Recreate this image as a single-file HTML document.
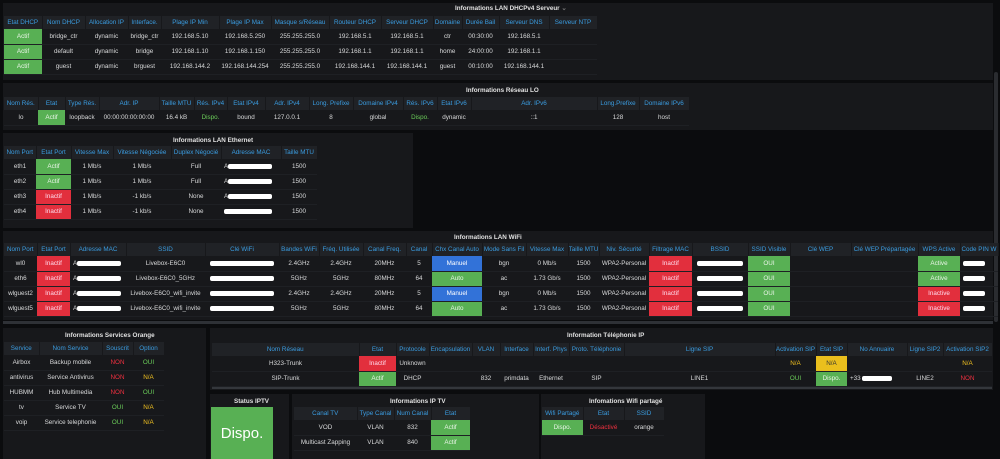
<!DOCTYPE html>
<html><head><meta charset="utf-8"><style>
*{margin:0;padding:0;box-sizing:border-box}
body{width:1000px;height:459px;background:#0b0c0e;font-family:"Liberation Sans",sans-serif;font-size:6.3px;color:#d8d9da;position:relative;overflow:hidden}
.p{position:absolute;background:#17181b}
.t{position:absolute;font-weight:bold;color:#e0e0e0;font-size:6.3px;white-space:nowrap}
table{position:absolute;border-collapse:collapse;table-layout:fixed}
th{height:13px;background:#202226;color:#3a9ce0;font-weight:normal;text-align:center;white-space:nowrap;overflow:hidden;border-right:1px solid #17181b}
td{height:15px;text-align:center;white-space:nowrap;overflow:hidden;border-bottom:1px solid #1e2024;padding:0 1px}
td.g{background:#58b054;color:#eaf5e8}
td.r{background:#e22f3d;color:#fde}
td.b{background:#3272d8;color:#fff}
td.y{background:#eabf1d;color:#333}
.gt{color:#6ccf5a}.rt{color:#f0303f}.yt{color:#f0c020}
.w{display:inline-block;background:#fff;height:5px;border-radius:2px;vertical-align:middle}
td.l{text-align:left;padding-left:3px}
</style></head><body>

<!-- Panel 1 DHCP -->
<div class="p" style="left:3px;top:3px;width:990px;height:77px"></div>
<div class="t" style="left:455px;top:5px">Informations LAN DHCPv4 Serveur <span style="color:#777">⌄</span></div>
<table style="left:4px;top:16px;width:593px">
<colgroup><col style="width:38px"><col style="width:43px"><col style="width:43px"><col style="width:33px"><col style="width:58px"><col style="width:52px"><col style="width:58px"><col style="width:52px"><col style="width:52px"><col style="width:29px"><col style="width:37px"><col style="width:50px"><col style="width:48px"></colgroup>
<tr><th>Etat DHCP</th><th>Nom DHCP</th><th>Allocation IP</th><th>Interface.</th><th>Plage IP Min</th><th>Plage IP Max</th><th>Masque s/Réseau</th><th>Routeur DHCP</th><th>Serveur DHCP</th><th>Domaine</th><th>Durée Bail</th><th>Serveur DNS</th><th>Serveur NTP</th></tr>
<tr><td class="g">Actif</td><td>bridge_ctr</td><td>dynamic</td><td>bridge_ctr</td><td>192.168.5.10</td><td>192.168.5.250</td><td>255.255.255.0</td><td>192.168.5.1</td><td>192.168.5.1</td><td>ctr</td><td>00:30:00</td><td>192.168.5.1</td><td></td></tr>
<tr><td class="g">Actif</td><td>default</td><td>dynamic</td><td>bridge</td><td>192.168.1.10</td><td>192.168.1.150</td><td>255.255.255.0</td><td>192.168.1.1</td><td>192.168.1.1</td><td>home</td><td>24:00:00</td><td>192.168.1.1</td><td></td></tr>
<tr><td class="g">Actif</td><td>guest</td><td>dynamic</td><td>brguest</td><td>192.168.144.2</td><td>192.168.144.254</td><td>255.255.255.0</td><td>192.168.144.1</td><td>192.168.144.1</td><td>guest</td><td>00:10:00</td><td>192.168.144.1</td><td></td></tr>
</table>

<!-- Panel 2 LO -->
<div class="p" style="left:3px;top:83px;width:990px;height:47px"></div>
<div class="t" style="left:466px;top:87px">Informations Réseau LO</div>
<table style="left:4px;top:97px;width:685px">
<colgroup><col style="width:34px"><col style="width:27px"><col style="width:34px"><col style="width:60px"><col style="width:35px"><col style="width:33px"><col style="width:38px"><col style="width:44px"><col style="width:44px"><col style="width:50px"><col style="width:34px"><col style="width:34px"><col style="width:126px"><col style="width:42px"><col style="width:50px"></colgroup>
<tr><th>Nom Rés.</th><th>Etat</th><th>Type Rés.</th><th>Adr. IP</th><th>Taille MTU</th><th>Rés. IPv4</th><th>Etat IPv4</th><th>Adr. IPv4</th><th>Long. Prefixe</th><th>Domaine IPv4</th><th>Rés. IPv6</th><th>Etat IPv6</th><th>Adr. IPv6</th><th>Long.Prefixe</th><th>Domaine IPv6</th></tr>
<tr><td>lo</td><td class="g">Actif</td><td>loopback</td><td>00:00:00:00:00:00</td><td>16.4 kB</td><td class="gt">Dispo.</td><td>bound</td><td>127.0.0.1</td><td>8</td><td>global</td><td class="gt">Dispo.</td><td>dynamic</td><td>::1</td><td>128</td><td>host</td></tr>
</table>

<!-- Panel 3 Ethernet -->
<div class="p" style="left:3px;top:133px;width:410px;height:95px"></div>
<div class="t" style="left:173px;top:137px">Informations LAN Ethernet</div>
<table style="left:4px;top:146px;width:313px">
<colgroup><col style="width:32px"><col style="width:35px"><col style="width:42px"><col style="width:58px"><col style="width:50px"><col style="width:60px"><col style="width:36px"></colgroup>
<tr><th>Nom Port</th><th>Etat Port</th><th>Vitesse Max</th><th>Vitesse Négociée</th><th>Duplex Négocié</th><th>Adresse MAC</th><th>Taille MTU</th></tr>
<tr><td>eth1</td><td class="g">Actif</td><td>1 Mb/s</td><td>1 Mb/s</td><td>Full</td><td class="l">A<span class="w" style="width:44px"></span></td><td>1500</td></tr>
<tr><td>eth2</td><td class="g">Actif</td><td>1 Mb/s</td><td>1 Mb/s</td><td>Full</td><td class="l">A<span class="w" style="width:44px"></span></td><td>1500</td></tr>
<tr><td>eth3</td><td class="r">Inactif</td><td>1 Mb/s</td><td>-1 kb/s</td><td>None</td><td class="l">A<span class="w" style="width:44px"></span></td><td>1500</td></tr>
<tr><td>eth4</td><td class="r">Inactif</td><td>1 Mb/s</td><td>-1 kb/s</td><td>None</td><td class="l"><span class="w" style="width:48px"></span></td><td>1500</td></tr>
</table>

<!-- scrollbar -->
<div style="position:absolute;left:994px;top:72px;width:4px;height:250px;background:#2a2c30;border-radius:2px"></div>

<!-- Panel 4 WiFi -->
<div class="p" style="left:3px;top:231px;width:990px;height:89px"></div>
<div class="t" style="left:454px;top:234px">Informations LAN WiFi</div>
<table style="left:4px;top:243px;width:994px">
<colgroup><col style="width:33px"><col style="width:33px"><col style="width:56px"><col style="width:79px"><col style="width:74px"><col style="width:40px"><col style="width:44px"><col style="width:43px"><col style="width:26px"><col style="width:50px"><col style="width:44px"><col style="width:42px"><col style="width:31px"><col style="width:50px"><col style="width:43px"><col style="width:56px"><col style="width:42px"><col style="width:61px"><col style="width:67px"><col style="width:42px"><col style="width:38px"></colgroup>
<tr><th>Nom Port</th><th>Etat Port</th><th>Adresse MAC</th><th>SSID</th><th>Clé WiFi</th><th>Bandes WiFi</th><th>Fréq. Utilisée</th><th>Canal Freq.</th><th>Canal</th><th>Chx Canal Auto</th><th>Mode Sans Fil</th><th>Vitesse Max</th><th>Taille MTU</th><th>Niv. Sécurité</th><th>Filtrage MAC</th><th>BSSID</th><th>SSID Visible</th><th>Clé WEP</th><th>Clé WEP Prépartagée</th><th>WPS Active</th><th>Code PIN W</th></tr>
<tr><td>wl0</td><td class="r">Inactif</td><td class="l">A<span class="w" style="width:44px"></span></td><td>Livebox-E6C0</td><td><span class="w" style="width:64px"></span></td><td>2.4GHz</td><td>2.4GHz</td><td>20MHz</td><td>5</td><td class="b">Manuel</td><td>bgn</td><td>0 Mb/s</td><td>1500</td><td>WPA2-Personal</td><td class="r">Inactif</td><td><span class="w" style="width:46px"></span></td><td class="g">OUI</td><td></td><td></td><td class="g">Active</td><td class="l"><span class="w" style="width:22px"></span></td></tr>
<tr><td>eth6</td><td class="r">Inactif</td><td class="l">A<span class="w" style="width:44px"></span></td><td>Livebox-E6C0_5GHz</td><td><span class="w" style="width:64px"></span></td><td>5GHz</td><td>5GHz</td><td>80MHz</td><td>64</td><td class="g">Auto</td><td>ac</td><td>1.73 Gb/s</td><td>1500</td><td>WPA2-Personal</td><td class="r">Inactif</td><td><span class="w" style="width:46px"></span></td><td class="g">OUI</td><td></td><td></td><td class="g">Active</td><td class="l"><span class="w" style="width:22px"></span></td></tr>
<tr><td>wlguest2</td><td class="r">Inactif</td><td class="l">A<span class="w" style="width:44px"></span></td><td>Livebox-E6C0_wifi_invite</td><td><span class="w" style="width:64px"></span></td><td>2.4GHz</td><td>2.4GHz</td><td>20MHz</td><td>5</td><td class="b">Manuel</td><td>bgn</td><td>0 Mb/s</td><td>1500</td><td>WPA2-Personal</td><td class="r">Inactif</td><td><span class="w" style="width:46px"></span></td><td class="g">OUI</td><td></td><td></td><td class="r">Inactive</td><td class="l"><span class="w" style="width:22px"></span></td></tr>
<tr><td>wlguest5</td><td class="r">Inactif</td><td class="l">A<span class="w" style="width:44px"></span></td><td>Livebox-E6C0_wifi_invite</td><td><span class="w" style="width:64px"></span></td><td>5GHz</td><td>5GHz</td><td>80MHz</td><td>64</td><td class="g">Auto</td><td>ac</td><td>1.73 Gb/s</td><td>1500</td><td>WPA2-Personal</td><td class="r">Inactif</td><td><span class="w" style="width:46px"></span></td><td class="g">OUI</td><td></td><td></td><td class="r">Inactive</td><td class="l"><span class="w" style="width:22px"></span></td></tr>
</table>
<div style="position:absolute;left:3px;top:321px;width:990px;height:3px;background:#2e3136"></div>

<!-- Panel 5 Services Orange -->
<div class="p" style="left:3px;top:328px;width:203px;height:131px"></div>
<div class="t" style="left:65px;top:332px">Informations Services Orange</div>
<table style="left:4px;top:342px;width:160px">
<colgroup><col style="width:35px"><col style="width:63px"><col style="width:31px"><col style="width:31px"></colgroup>
<tr><th>Service</th><th>Nom Service</th><th>Souscrit</th><th>Option</th></tr>
<tr><td>Airbox</td><td>Backup mobile</td><td class="rt">NON</td><td class="gt">OUI</td></tr>
<tr><td>antivirus</td><td>Service Antivirus</td><td class="rt">NON</td><td class="yt">N/A</td></tr>
<tr><td>HUBMM</td><td>Hub Multimedia</td><td class="rt">NON</td><td class="gt">OUI</td></tr>
<tr><td>tv</td><td>Service TV</td><td class="gt">OUI</td><td class="yt">N/A</td></tr>
<tr><td>voip</td><td>Service telephonie</td><td class="gt">OUI</td><td class="yt">N/A</td></tr>
</table>

<!-- Panel 6 Téléphonie -->
<div class="p" style="left:210px;top:328px;width:783px;height:62px"></div>
<div class="t" style="left:567px;top:332px">Information Téléphonie IP</div>
<table style="left:212px;top:343px;width:780px">
<colgroup><col style="width:147px"><col style="width:37px"><col style="width:33px"><col style="width:43px"><col style="width:28px"><col style="width:33px"><col style="width:36px"><col style="width:55px"><col style="width:151px"><col style="width:41px"><col style="width:31px"><col style="width:60px"><col style="width:36px"><col style="width:49px"></colgroup>
<tr><th>Nom Réseau</th><th>Etat</th><th>Protocole</th><th>Encapsulation</th><th>VLAN</th><th>Interface</th><th>Interf. Phys</th><th>Proto. Téléphonie</th><th>Ligne SIP</th><th>Activation SIP</th><th>Etat SIP</th><th>No Annuaire</th><th>Ligne SIP2</th><th>Activation SIP2</th></tr>
<tr><td>H323-Trunk</td><td class="r">Inactif</td><td>Unknown</td><td></td><td></td><td></td><td></td><td></td><td></td><td class="yt">N/A</td><td class="y">N/A</td><td></td><td></td><td class="yt">N/A</td></tr>
<tr><td>SIP-Trunk</td><td class="g">Actif</td><td>DHCP</td><td></td><td>832</td><td>primdata</td><td>Ethernet</td><td>SIP</td><td>LINE1</td><td class="gt">OUI</td><td class="g">Dispo.</td><td class="l">+33 <span class="w" style="width:30px"></span></td><td>LINE2</td><td class="rt">NON</td></tr>
</table>
<div style="position:absolute;left:212px;top:387px;width:780px;height:2px;background:#34373c"></div>

<!-- Status IPTV -->
<div class="p" style="left:210px;top:394px;width:79px;height:65px"></div>
<div class="t" style="left:234px;top:398px">Status IPTV</div>
<div style="position:absolute;left:211px;top:407px;width:62px;height:52px;background:#58b054;color:#fff;font-size:15px;display:flex;align-items:center;justify-content:center">Dispo.</div>

<!-- IP TV -->
<div class="p" style="left:292px;top:394px;width:247px;height:65px"></div>
<div class="t" style="left:390px;top:398px">Informations IP TV</div>
<table style="left:294px;top:407px;width:176px">
<colgroup><col style="width:63px"><col style="width:37px"><col style="width:37px"><col style="width:39px"></colgroup>
<tr><th>Canal TV</th><th>Type Canal</th><th>Num Canal</th><th>Etat</th></tr>
<tr><td>VOD</td><td>VLAN</td><td>832</td><td class="g">Actif</td></tr>
<tr><td>Multicast Zapping</td><td>VLAN</td><td>840</td><td class="g">Actif</td></tr>
</table>

<!-- Wifi partagé -->
<div class="p" style="left:541px;top:394px;width:164px;height:65px"></div>
<div class="t" style="left:589px;top:398px">Infomations Wifi partagé</div>
<table style="left:542px;top:407px;width:122px">
<colgroup><col style="width:41px"><col style="width:41px"><col style="width:40px"></colgroup>
<tr><th>Wifi Partagé</th><th>Etat</th><th>SSID</th></tr>
<tr><td class="g">Dispo.</td><td class="rt">Désactivé</td><td>orange</td></tr>
</table>
</body></html>
